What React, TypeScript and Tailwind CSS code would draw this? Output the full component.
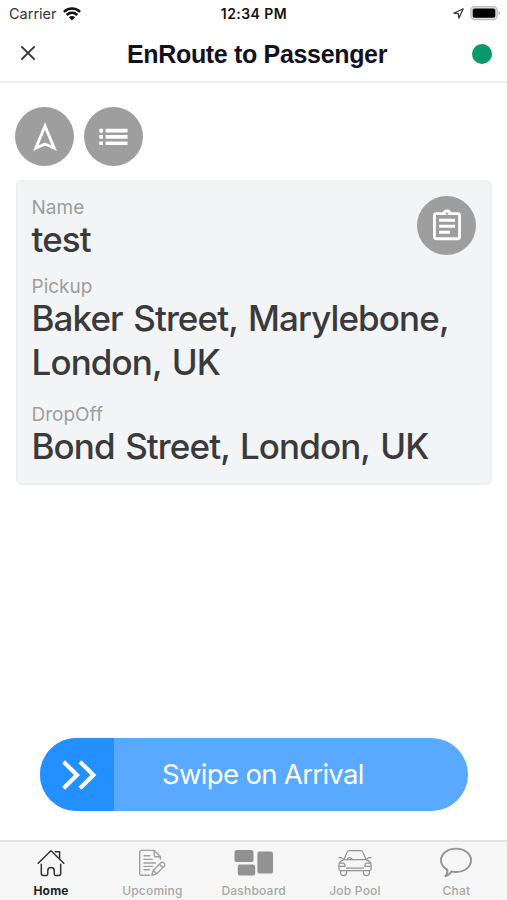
import type { ReactNode } from "react";

interface Tab {
  label: string;
  icon: ReactNode;
  active?: boolean;
}

function WifiIcon() {
  return (
    <svg width="18" height="14" viewBox="0 0 18 14" fill="none" stroke="#111" strokeWidth="2.5">
      <path d="M0.9 4.8 A11.6 11.6 0 0 1 17.1 4.8" />
      <path d="M3.8 8 A7.4 7.4 0 0 1 14.2 8" />
      <path d="M9 13.6 L5.9 10.2 A4.4 4.4 0 0 1 12.1 10.2 Z" fill="#111" stroke="none" />
    </svg>
  );
}

function LocationIcon() {
  return (
    <svg width="11" height="11" viewBox="0 0 11 11" fill="none" stroke="#333" strokeWidth="1.2" strokeLinejoin="round">
      <path d="M10.2 0.8 L0.8 5.2 L5.4 5.6 L5.9 10.2 Z" />
    </svg>
  );
}

function BatteryIcon() {
  return (
    <svg width="31" height="15" viewBox="0 0 31 15">
      <rect x="0.8" y="0.6" width="26.4" height="13" rx="3.6" fill="#e2e2e2" stroke="#bdbdbd" strokeWidth="1.2" />
      <rect x="2.7" y="2.5" width="22.6" height="9.2" rx="1.6" fill="#000" />
      <path d="M28.6 5 Q30.4 5.8 30.4 7.1 Q30.4 8.4 28.6 9.2 Z" fill="#b5b5b5" />
    </svg>
  );
}

function CompassArrowIcon() {
  return (
    <svg width="24" height="30" viewBox="0 0 24 30" fill="none" stroke="#fff" strokeWidth="2.9">
      <path d="M12 4 L2.8 26.2 L12 22 L21.2 26.2 Z" />
    </svg>
  );
}

function ListIcon() {
  return (
    <svg width="29" height="18" viewBox="0 0 29 18" fill="#fff">
      <path d="M0.3 0.8 H4 V4.4 H0.3 Z M0.3 7.1 H4 V10.7 H0.3 Z M0.3 13.4 H4 V17 H0.3 Z" />
      <path d="M6.6 0.8 H28.5 V4.4 H6.6 Z M6.6 7.1 H28.5 V10.7 H6.6 Z M6.6 13.4 H28.5 V17 H6.6 Z" />
    </svg>
  );
}

function ClipboardIcon() {
  return (
    <svg className="mb-[2px]" width="28" height="32" viewBox="0 0 28 32" fill="none" stroke="#fff">
      <rect x="1.4" y="4.6" width="25.2" height="25.2" rx="1.8" strokeWidth="2.9" />
      <path d="M9 5 A5 4.4 0 0 1 19 5 Z" fill="#fff" stroke="none" />
      <circle cx="14" cy="4.6" r="1.2" fill="#9e9e9e" stroke="none" />
      <path d="M6 11.3 H22 M6 17.3 H22 M6 23.3 H17" strokeWidth="3" />
    </svg>
  );
}

function HomeIcon() {
  return (
    <svg width="28" height="28" viewBox="0 0 28 28" fill="none" stroke="#333" strokeWidth="1.5" strokeLinecap="round" strokeLinejoin="round">
      <path d="M1.2 14.2 L13.4 2.2 Q14 1.6 14.6 2.2 L26.8 14.2" />
      <path d="M18.4 2.8 H22.6 V9.2" />
      <path d="M4.3 15.2 V24.6 Q4.3 26.4 6 26.4 H9.3 Q10.8 26.4 10.8 24.8 V21.4 Q10.8 18.4 14 18.4 Q17.2 18.4 17.2 21.4 V24.8 Q17.2 26.4 18.7 26.4 H22 Q23.7 26.4 23.7 24.6 V15.2" />
    </svg>
  );
}

function NoteIcon() {
  return (
    <svg width="28" height="28" viewBox="0 0 28 28" fill="none" stroke="#a0a0a0" strokeWidth="1.4" strokeLinecap="round" strokeLinejoin="round">
      <path d="M11.6 26.3 H3.4 Q1.7 26.3 1.7 24.6 V3.1 Q1.7 1.4 3.4 1.4 H16.2 L22.4 7.6 V10" />
      <path d="M16.2 1.6 V6.2 Q16.2 7.8 17.8 7.8 H22.2" />
      <path d="M6 6.8 H11.8 M6 10.4 H14 M6 14 H17.4 M6 17.4 H14.6 M6 20.8 H11.4" />
      <path d="M13.8 26.4 L15.2 21.4 L22.8 13.8 Q24.2 12.6 25.6 13.8 L26.2 14.4 Q27.4 15.8 26.2 17.2 L18.6 24.8 Z M21.4 15.2 L24.8 18.6 M15.2 21.4 L18.6 24.8" />
    </svg>
  );
}

function DashboardIcon() {
  return (
    <svg width="40" height="28" viewBox="0 0 40 28" fill="#929292">
      <rect x="0.5" y="0.9" width="19" height="12.2" rx="2.2" />
      <rect x="3.8" y="15.6" width="17.4" height="11" rx="2.2" />
      <rect x="23.4" y="2.6" width="15.6" height="22" rx="2.2" />
    </svg>
  );
}

function CarIcon() {
  return (
    <svg width="34" height="28" viewBox="0 0 34 28" fill="none" stroke="#929292" strokeWidth="1.2" strokeLinecap="round" strokeLinejoin="round">
      <path d="M6 10.6 L9 3.4 Q9.6 1.6 11.2 1.6 H22.8 Q24.4 1.6 25 3.4 L28 10.6 Z" />
      <path d="M1 8.6 H3.4 L5.6 10.4 M33 8.6 H30.6 L28.4 10.4" />
      <path d="M9 10.4 Q11.4 6.6 13.6 10.4 M12 8.8 L14.4 10.2" />
      <path d="M6 10.6 Q1 12.4 0.9 16 V20 Q1 21.6 2.6 21.6 H31.4 Q33 21.6 33.1 20 V16 Q33 12.4 28 10.6" />
      <path d="M1.6 14.2 H5.6 Q7.4 14.8 7 17.4 H1.2 M32.4 14.2 H28.4 Q26.6 14.8 27 17.4 H32.8" />
      <path d="M8.6 19.2 H25.4" />
      <path d="M2.6 21.6 V23.8 Q2.6 26.6 5.6 26.6 Q8.6 26.6 8.6 23.8 V21.6 M25.4 21.6 V23.8 Q25.4 26.6 28.4 26.6 Q31.4 26.6 31.4 23.8 V21.6" />
    </svg>
  );
}

function ChatIcon() {
  return (
    <svg width="34" height="31" viewBox="0 0 34 31" fill="none" stroke="#929292" strokeWidth="1.9" strokeLinejoin="round">
      <path d="M17 1.6 C25.6 1.6 32 6.7 32 13.3 C32 19.9 25.6 25 17 25 C15 25 13.6 24.8 12.4 24.4 C11 27 9 28.6 6.4 29.2 C8 27.4 8.6 25.2 8.3 22.8 C4.4 20.6 2 17.2 2 13.3 C2 6.7 8.4 1.6 17 1.6 Z" />
    </svg>
  );
}

const tabs: Tab[] = [
  { label: "Home", icon: <HomeIcon />, active: true },
  { label: "Upcoming", icon: <NoteIcon /> },
  { label: "Dashboard", icon: <DashboardIcon /> },
  { label: "Job Pool", icon: <CarIcon /> },
  { label: "Chat", icon: <ChatIcon /> },
];

function RoundButton({ label, children }: { label: string; children: ReactNode }) {
  return (
    <button
      aria-label={label}
      className="flex h-[59px] w-[59px] shrink-0 items-center justify-center rounded-full bg-[#9e9e9e]"
    >
      {children}
    </button>
  );
}

function Field({ label, children }: { label: string; children: ReactNode }) {
  return (
    <div>
      <p className="text-[19px] leading-5 text-[#9e9e9e]">{label}</p>
      <p className="-mt-px text-[35px] leading-[44px] font-[450] tracking-[-0.9px] [word-spacing:2px] whitespace-nowrap text-[#3a3a3c]">
        {children}
      </p>
    </div>
  );
}

export default function App() {
  return (
    <main className="flex h-[900px] w-[507px] flex-col overflow-hidden bg-white font-['Inter','Liberation_Sans',sans-serif]">
      {/* Status bar */}
      <div className="grid h-7 shrink-0 grid-cols-3 items-center pr-[6px] pb-px pl-[9px]">
        <div className="flex items-center gap-[6px]">
          <span className="pt-[2px] text-[14.5px] leading-none text-[#333]">Carrier</span>
          <WifiIcon />
        </div>
        <p className="-ml-[2px] text-center text-[14px] leading-none font-semibold tracking-[0.45px] text-[#111]">
          12:34 PM
        </p>
        <div className="flex items-center justify-end gap-[6px]">
          <LocationIcon />
          <BatteryIcon />
        </div>
      </div>

      {/* Header */}
      <header className="flex h-[55px] shrink-0 items-center justify-between border-b-2 border-[#eeeeef] pr-[15px] pb-[3px] pl-5">
        <button aria-label="Close">
          <svg width="16" height="16" viewBox="0 0 16 16" stroke="#333" strokeWidth="1.9">
            <path d="M1.3 1.3 L14.7 14.7 M14.7 1.3 L1.3 14.7" />
          </svg>
        </button>
        <h1 className="pt-[2px] pl-[6px] font-['Liberation_Sans',sans-serif] text-[25px] leading-none font-bold tracking-[-0.33px] text-[#12121f]">
          EnRoute to Passenger
        </h1>
        <span className="mt-px h-5 w-5 rounded-full bg-[#079969]" />
      </header>

      {/* Job details */}
      <section className="flex-1 px-[15.5px] pt-6">
        <div className="-ml-[0.5px] flex gap-[10px]">
          <RoundButton label="Navigate">
            <CompassArrowIcon />
          </RoundButton>
          <RoundButton label="Job list">
            <ListIcon />
          </RoundButton>
        </div>

        <div className="mt-[14px] flex h-[305px] justify-between rounded-md border-2 border-[#edeff1] bg-[#f2f4f6] py-[14px] pr-[13.5px] pl-[14px]">
          <div className="w-0 pt-[2px]">
            <Field label="Name">test</Field>
            <div className="mt-4">
              <Field label="Pickup">
                Baker Street, Marylebone,
                <br />
                London, UK
              </Field>
            </div>
            <div className="mt-[21px]">
              <Field label="DropOff">Bond Street, London, UK</Field>
            </div>
          </div>
          <RoundButton label="Job notes">
            <ClipboardIcon />
          </RoundButton>
        </div>
      </section>

      {/* Swipe button */}
      <div className="mr-[39px] mb-[29px] ml-10 flex h-[73px] shrink-0 overflow-hidden rounded-full bg-[#58a9ff]">
        <div className="flex w-[74px] items-center bg-[#2490ff] pl-[21px]">
          <svg width="36" height="30" viewBox="0 0 36 30" fill="none" stroke="#fff" strokeWidth="4.2">
            <path d="M2.6 1.8 L16 15 L2.6 28.2 M19 1.8 L32.4 15 L19 28.2" />
          </svg>
        </div>
        <p className="flex items-center pl-[48px] text-[27.5px] tracking-[-0.67px] whitespace-nowrap text-white">
          Swipe on Arrival
        </p>
      </div>

      {/* Tab bar */}
      <nav className="grid h-[60px] shrink-0 grid-cols-5 border-t-2 border-[#e4e4e4] bg-[#f6f6f6] pl-[0.4px]">
        {tabs.map((tab) => (
          <div key={tab.label} className="flex flex-col items-center pt-[5px]">
            <div className="flex h-[31px] items-center">{tab.icon}</div>
            <span
              className={`mt-[6px] text-[12px] leading-[14px] tracking-[0.2px] ${
                tab.active ? "font-bold text-[#222]" : "font-medium text-[#a6a6a6]"
              }`}
            >
              {tab.label}
            </span>
          </div>
        ))}
      </nav>
    </main>
  );
}
